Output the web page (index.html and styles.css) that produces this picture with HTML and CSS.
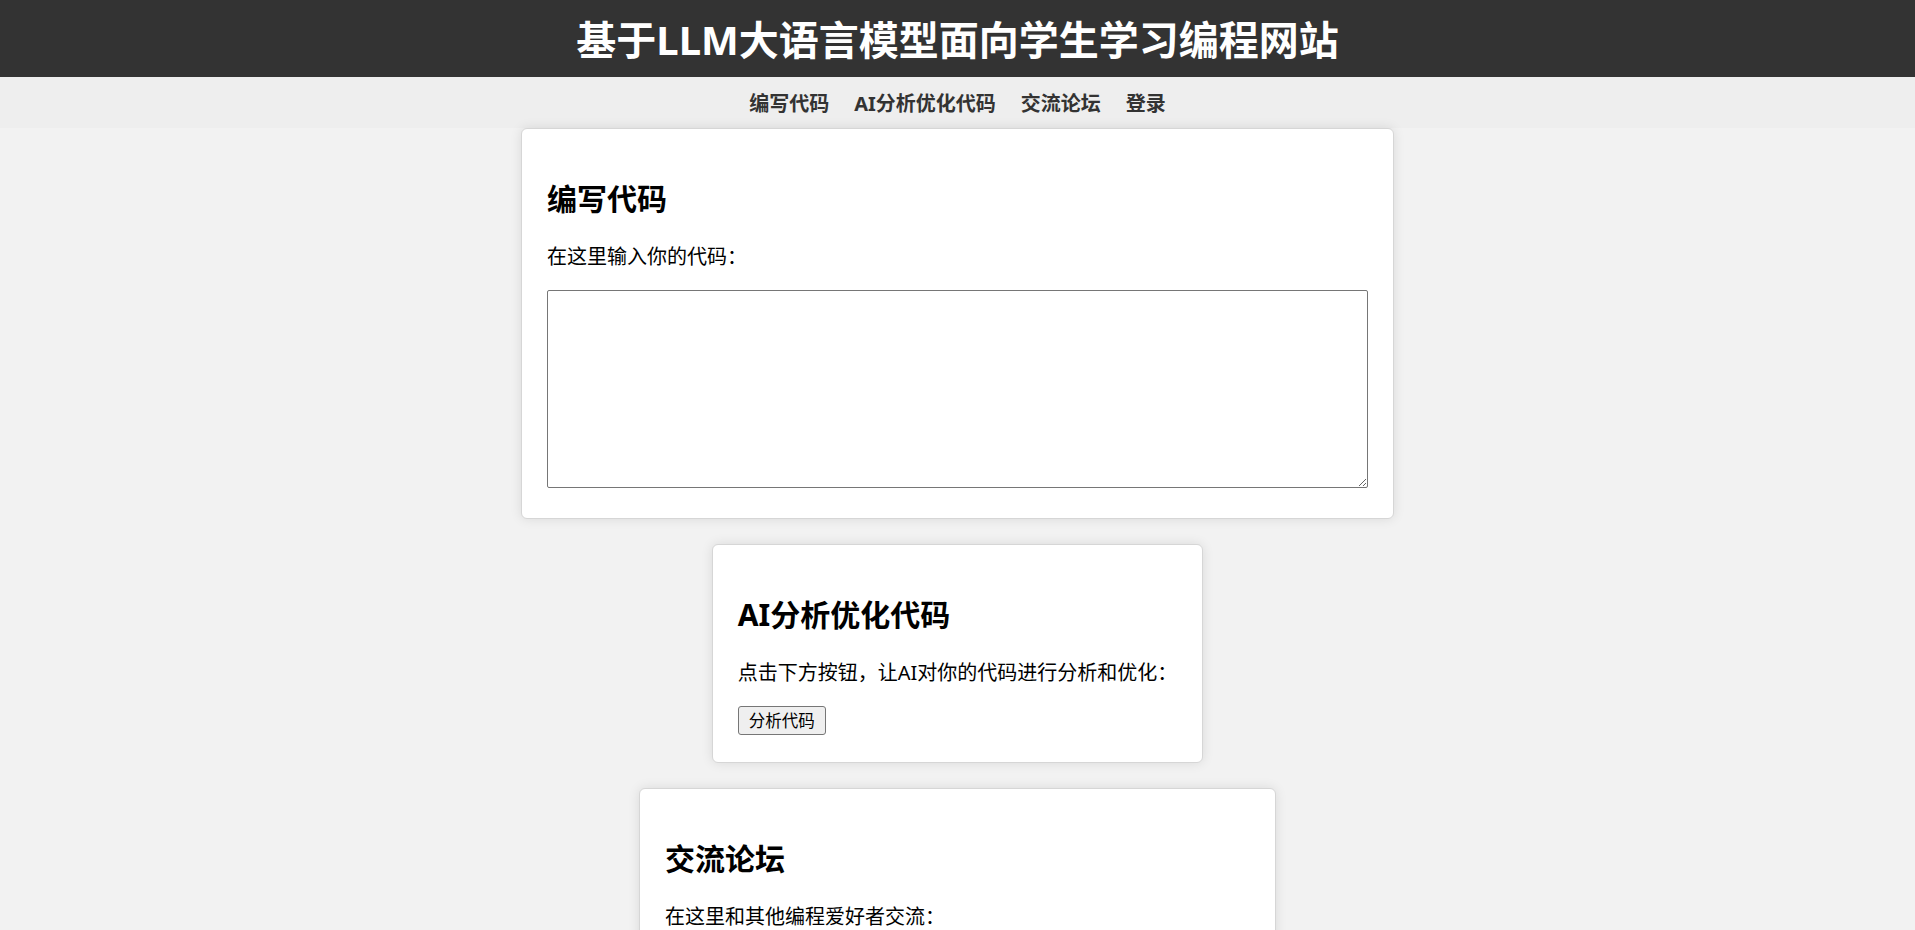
FILE: index.html
```html
<!DOCTYPE html>
<html lang="zh-CN">
<head>
<meta charset="utf-8">
<title>基于LLM大语言模型面向学生学习编程网站</title>
<link rel="stylesheet" href="styles.css">
</head>
<body>
<header class="site-header">
  <h1 class="site-title">基于LLM大语言模型面向学生学习编程网站</h1>
</header>
<nav class="site-nav">
  <a class="nav-link" href="#write">编写代码</a>
  <a class="nav-link" href="#ai">AI分析优化代码</a>
  <a class="nav-link" href="#forum">交流论坛</a>
  <a class="nav-link" href="#login">登录</a>
</nav>
<main class="content">
  <section class="card" id="write">
    <h2 class="card-title">编写代码</h2>
    <p class="card-text">在这里输入你的代码：</p>
    <textarea class="code-input"></textarea>
  </section>
  <section class="card" id="ai">
    <h2 class="card-title">AI分析优化代码</h2>
    <p class="card-text">点击下方按钮，让AI对你的代码进行分析和优化：</p>
    <button class="btn" type="button">分析代码</button>
  </section>
  <section class="card" id="forum">
    <h2 class="card-title">交流论坛</h2>
    <p class="card-text">在这里和其他编程爱好者交流：</p>
    <textarea class="forum-input"></textarea>
  </section>
</main>
</body>
</html>
```
FILE: styles.css
```css
html, body {
  margin: 0;
  padding: 0;
}
body {
  background: #f2f2f2;
  font-family: "Noto Sans", "Noto Sans CJK SC", sans-serif;
  font-size: 20px;
  line-height: 1.32;
  color: #000;
}
.site-header {
  background: #333;
  color: #fff;
  text-align: center;
  height: 77px;
  display: flex;
  align-items: center;
  justify-content: center;
}
.site-title {
  margin: 0;
  padding-top: 3px;
  font-size: 40px;
  line-height: 54px;
  font-weight: 700;
}
.site-nav {
  background: #eee;
  height: 51px;
  display: flex;
  justify-content: center;
  align-items: center;
  gap: 25px;
}
.nav-link {
  color: #333;
  font-weight: 700;
  font-size: 20px;
  text-decoration: none;
  padding-top: 4px;
}
.content {
  display: flex;
  flex-direction: column;
  align-items: center;
  gap: 25px;
  padding-bottom: 40px;
}
.card {
  background: #fff;
  border: 1px solid #d6d6d6;
  border-radius: 6px;
  box-shadow: 0 0 12px rgba(0, 0, 0, 0.1);
  padding: 0 25px 25px;
  display: flex;
  flex-direction: column;
  align-items: flex-start;
}
.card-title {
  font-size: 30px;
  line-height: 40px;
  font-weight: 700;
  margin: 50px 0 25px;
}
.card-text {
  margin: 0 0 20px;
  font-size: 20px;
  line-height: 26px;
}
.code-input {
  box-sizing: border-box;
  width: 821px;
  height: 198px;
  margin: 0 0 5px;
  border: 1px solid #767676;
  border-radius: 2px;
  font-family: "Liberation Mono", monospace;
  font-size: 16px;
  padding: 3px;
}
.forum-input {
  box-sizing: border-box;
  width: 585px;
  height: 150px;
  margin: 0 0 5px;
  border: 1px solid #767676;
  border-radius: 2px;
  font-family: "Liberation Mono", monospace;
  font-size: 16px;
  padding: 3px;
}
.btn {
  box-sizing: border-box;
  height: 29px;
  width: 88px;
  padding: 0;
  margin-bottom: 2px;
  font-family: "Noto Sans CJK SC", sans-serif;
  font-size: 16.5px;
  line-height: 1;
  color: #000;
  background: #efefef;
  border: 1px solid #767676;
  border-radius: 3px;
}
```
